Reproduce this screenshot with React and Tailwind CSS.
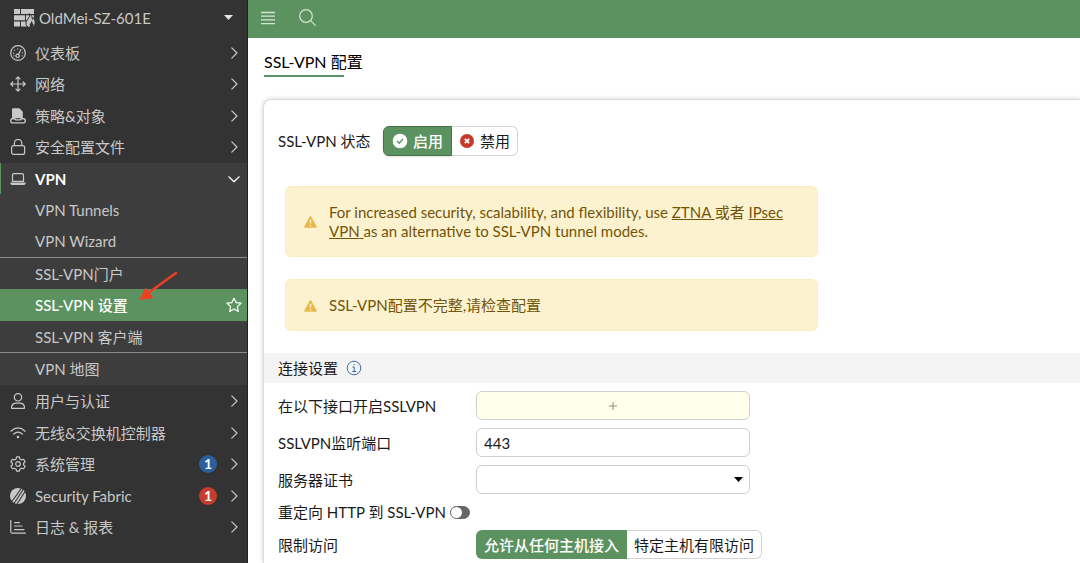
import { useState } from "react";

const line = {
  fill: "none",
  stroke: "currentColor",
  strokeWidth: 1.2,
  strokeLinecap: "round",
  strokeLinejoin: "round",
};

const icons = {
  gauge: (
    <g {...line}>
      <circle cx="8" cy="8" r="7.3" />
      <circle cx="7.6" cy="10.8" r="1.7" />
      <path d="M8.6 9.3 11 4.6" />
      <path d="M3.4 8.2h.2M4.6 5.2l.1.1M7.6 3.8V4M12.4 7.8h.2M3.9 10.8h.1M12.1 10.8h.1" />
    </g>
  ),
  move: (
    <g {...line}>
      <path d="M8 .8v14.4M.8 8h14.4M6 2.8l2-2 2 2M6 13.2l2 2 2-2M2.8 6l-2 2 2 2M13.2 6l2 2-2 2" />
    </g>
  ),
  policy: (
    <g>
      <path fill="currentColor" d="M2 1.2Q2 .3 3 .3h6.4l3.4 3.4v6.5H2z" />
      <path
        fill="#333333"
        stroke="currentColor"
        strokeWidth="1.4"
        d="M2.4 10.7h2.4q.5 1.2 1.5 1.2h3.6q1-.1 1.4-1.2h2.3q1.6 0 1.6 1.7v.8q0 1.7-1.7 1.7H2.5q-1.7 0-1.7-1.7v-.8q0-1.7 1.6-1.7z"
      />
    </g>
  ),
  lock: (
    <g {...line}>
      <rect x="1.6" y="6.6" width="13" height="8.8" rx="2" />
      <path d="M4.4 6.4V4a3.7 3.7 0 0 1 7.4 0v2.4" />
    </g>
  ),
  laptop: (
    <g {...line}>
      <path d="M2.5 10.4V4q0-1.4 1.4-1.4h8.2q1.4 0 1.4 1.4v6.4z" />
      <path fill="currentColor" d="M.8 12h14.4q-.2 1.5-1.6 1.5H2.4Q1 13.5.8 12z" />
    </g>
  ),
  user: (
    <g {...line}>
      <circle cx="8" cy="4.3" r="3.7" />
      <path d="M1.5 15.3q-.2-4.5 4-5.1h5q4.2.6 4 5.1z" />
    </g>
  ),
  wifi: (
    <g {...line}>
      <path d="M.9 6.2Q8-.4 15.1 6.2M3.7 9q4.3-3.8 8.6 0" />
      <circle cx="8" cy="12" r="1.3" fill="currentColor" stroke="none" />
    </g>
  ),
  gear: (
    <g {...line}>
      <path d="M6.6.9h2.8l.5 2 1.7 1 2-.6 1.5 2.5-1.5 1.4v1.7l1.5 1.4-1.5 2.5-2-.6-1.7 1-.5 2H6.6l-.5-2-1.7-1-2 .6L.9 10.3l1.5-1.4V7.2L.9 5.8l1.5-2.5 2 .6 1.7-1z" />
      <circle cx="8" cy="8" r="2.3" />
    </g>
  ),
  fabric: (
    <g>
      <circle cx="8" cy="8" r="8" fill="currentColor" />
      <path
        stroke="#333333"
        strokeWidth="1.1"
        d="M13.2 1.5 4 15.5M15.2 3.2 7 16M11.5 0 7 6.5 1.8 13.5"
      />
    </g>
  ),
  chart: (
    <g {...line}>
      <path d="M.8 1.4v11q0 1.8 1.8 1.8h13M4.5 3.6h5M4.5 7h7.5M4.5 10.6h9.5" />
    </g>
  ),
};

const menu = [
  { label: "仪表板", icon: "gauge" },
  { label: "网络", icon: "move" },
  { label: "策略&对象", icon: "policy" },
  { label: "安全配置文件", icon: "lock" },
  {
    label: "VPN",
    icon: "laptop",
    items: [
      { label: "VPN Tunnels" },
      { label: "VPN Wizard" },
      { label: "SSL-VPN门户", divider: true },
      { label: "SSL-VPN 设置", active: true },
      { label: "SSL-VPN 客户端" },
      { label: "VPN 地图", divider: true },
    ],
  },
  { label: "用户与认证", icon: "user" },
  { label: "无线&交换机控制器", icon: "wifi" },
  { label: "系统管理", icon: "gear", badge: 1, badgeColor: "bg-[#2c5f9b]" },
  { label: "Security Fabric", icon: "fabric", badge: 1, badgeColor: "bg-[#c63d2d]" },
  { label: "日志 & 报表", icon: "chart" },
];

function Chevron({ open }) {
  return (
    <svg className="mr-[5px] size-4 shrink-0" viewBox="0 0 16 16" {...line}>
      <path d={open ? "M2.8 5.8 8 10.8l5.2-5" : "M5.8 2.8 11 8l-5.2 5.2"} />
    </svg>
  );
}

function RedArrow() {
  return (
    <svg
      className="pointer-events-none absolute bottom-[18px] left-[138px] h-8 w-10"
      viewBox="0 0 40 32"
    >
      <path d="M38 2 11 21.5" stroke="#f03e23" strokeWidth="2.4" strokeLinecap="round" />
      <path d="M1.5 29 7.5 16.5 15.5 27z" fill="#f03e23" />
    </svg>
  );
}

function SubMenu({ items }) {
  return (
    <ul>
      {items.map((item) => (
        <li
          key={item.label}
          className={`box-content odd:h-[31px] even:h-8 ${
            item.divider ? "border-t border-[#8a8a8a]" : ""
          }`}
        >
          <a
            href="#"
            className={`relative flex h-full items-center pl-[35px] ${
              item.active ? "bg-[#5c925f] font-medium text-white" : ""
            }`}
          >
            <span className="flex-1">{item.label}</span>
            {item.active && (
              <>
                <svg className="mr-[5px] size-4" viewBox="0 0 16 16" {...line}>
                  <path d="m8 1.2 2.1 4.4 4.9.6-3.6 3.4.9 4.9L8 12.1l-4.3 2.4.9-4.9L1 6.2l4.900-.6z" />
                </svg>
                <RedArrow />
              </>
            )}
          </a>
        </li>
      ))}
    </ul>
  );
}

function Sidebar() {
  return (
    <aside className="w-62 shrink-0 border-r border-[#222222] bg-[#333333] text-[#c8c8c8]">
      <button className="flex h-[37px] w-full items-center pb-0.5 pl-3.5 text-left">
        <svg className="h-[18px] w-[21px]" viewBox="0 0 21 18" fill="currentColor">
          <path d="M0 0h6v5H0zM7 0h13v5H7zM0 6.3h11v5H0zM12 6.3h8v5h-8zM0 12.6h6v5H0zM7 12.6h7v5H7z" />
          <path
            stroke="#333333"
            d="M15.5 4.500q1 3-1.500 5.500-2.800 3-2 5.500.6 1.900 2.500 2.700h4q2.700-1.200 2.700-4.200 0-3-1.700-5.500-.2 1.500-1 2Q18.500 7 15.500 4.500z"
          />
          <path fill="#333333" d="M16 18q-1-2.500.5-4 1.200-1 1-2.500 1.500 1.500 1 3l1 .5q.5 2-1 3z" />
        </svg>
        <span className="ml-1 flex-1">OldMei-SZ-601E</span>
        <svg className="mr-3.5 h-[5px] w-[9px]" viewBox="0 0 9 5" fill="#e4e4e4">
          <path d="M0 0h9L4.5 5z" />
        </svg>
      </button>
      <nav>
        <ul>
          {menu.map((entry, i) => (
            <li key={entry.label} className={entry.items ? "bg-[#3d3d3d]" : ""}>
              <button
                className={`flex w-full items-center text-left ${
                  i % 2 ? "h-8" : "h-[31px]"
                } ${
                  entry.items
                    ? "border-l border-[#5c925f] pl-[9px] font-bold text-white"
                    : "pl-2.5"
                }`}
              >
                <svg className="size-4 shrink-0 text-[#c8c8c8]" viewBox="0 0 16 16">
                  {icons[entry.icon]}
                </svg>
                <span className="ml-[9px] flex-1">{entry.label}</span>
                {entry.badge && (
                  <span
                    className={`mr-[9px] flex size-[18px] items-center justify-center rounded-full text-sm font-bold text-white ${entry.badgeColor}`}
                  >
                    {entry.badge}
                  </span>
                )}
                <Chevron open={Boolean(entry.items)} />
              </button>
              {entry.items && <SubMenu items={entry.items} />}
            </li>
          ))}
        </ul>
      </nav>
    </aside>
  );
}

function TopBar() {
  return (
    <header className="flex h-[38px] items-center gap-[23px] bg-[#5c925f] pb-[3px] pl-3 text-[#d5e5d5]">
      <button aria-label="Menu">
        <svg className="size-4" viewBox="0 0 16 16" stroke="currentColor" strokeWidth="1.3">
          <path d="M1 2.5h14M1 6.2h14M1 9.9h14M1 13.6h14" />
        </svg>
      </button>
      <button aria-label="Search">
        <svg className="size-[17px]" viewBox="0 0 17 17" {...line}>
          <circle cx="7" cy="7" r="6.3" />
          <path d="m11.6 11.6 4.7 4.7" />
        </svg>
      </button>
    </header>
  );
}

function Alert({ children }) {
  return (
    <div className="ml-[7px] flex max-w-[533px] items-center rounded-md border border-[#fbecc0] bg-[#fdf2d0] pt-4 pr-8 pb-[15px] pl-[18px] leading-[19px] text-[#725408]">
      <svg className="mr-3 h-3 w-[13px] shrink-0" viewBox="0 0 13 12">
        <path
          d="M6.5 1 12 11H1z"
          fill="#e8b949"
          stroke="#e8b949"
          strokeWidth="1.6"
          strokeLinejoin="round"
        />
        <path d="M6.5 3.8v3.6M6.5 8.9v1.3" stroke="#fdf2d0" strokeWidth="1.4" />
      </svg>
      <p>{children}</p>
    </div>
  );
}

function StatusToggle() {
  const [enabled, setEnabled] = useState(true);
  return (
    <div role="radiogroup" aria-labelledby="status-label" className="flex items-center">
      <span id="status-label" className="w-[105px]">
        SSL-VPN 状态
      </span>
      <label className="flex h-[30px] items-center gap-[5px] rounded-l-md border border-[#47704a] bg-[#5c925f] px-2 font-medium text-white shadow">
        <input
          type="radio"
          name="status"
          className="sr-only"
          checked={enabled}
          onChange={() => setEnabled(true)}
        />
        <svg className="size-4" viewBox="0 0 16 16">
          <circle cx="8" cy="8" r="7.3" fill="#fff" />
          <path d="m5 8 2.2 2.2L11 6" fill="none" stroke="#5c925f" strokeWidth="1.4" />
        </svg>
        启用
      </label>
      <label className="flex h-[30px] items-center gap-[5px] rounded-r-md border border-l-0 border-[#d3d3d3] bg-white px-[7px]">
        <input
          type="radio"
          name="status"
          className="sr-only"
          checked={!enabled}
          onChange={() => setEnabled(false)}
        />
        <svg className="size-4" viewBox="0 0 16 16">
          <circle cx="8" cy="8" r="7" fill="#c5392b" />
          <path d="m5.8 5.8 4.4 4.4M10.2 5.8l-4.4 4.4" stroke="#fff" strokeWidth="1.8" />
        </svg>
        禁用
      </label>
    </div>
  );
}

const field = "h-[29px] w-[274px] rounded-md border border-[#cfcfcf]";

function ConnectionSettings() {
  const [port, setPort] = useState("443");
  const [redirect, setRedirect] = useState(false);
  const [access, setAccess] = useState("any");

  return (
    <section>
      <h2 className="mt-[22px] flex h-[30px] items-center gap-2 bg-[#f4f4f4] pl-3.5">
        连接设置
        <svg className="size-4" viewBox="0 0 16 16" fill="none" stroke="#3b6ca8">
          <circle cx="8" cy="8" r="6.8" />
          <path d="M6.5 7h1.7v4.3M6.2 11.5h4M7.5 4.7h1.2" />
        </svg>
      </h2>
      <div className="flex flex-col gap-2 pt-2 pl-3.5">
        <div className="flex items-center">
          <label htmlFor="interfaces" className="w-[198px]">
            在以下接口开启SSLVPN
          </label>
          <button
            id="interfaces"
            className={`${field} flex items-center justify-center bg-[#ffffec]`}
          >
            <svg className="size-2" viewBox="0 0 8 8" stroke="#8c8c86">
              <path d="M4 0v8M0 4h8" />
            </svg>
          </button>
        </div>
        <div className="flex items-center">
          <label htmlFor="port" className="w-[198px]">
            SSLVPN监听端口
          </label>
          <input
            id="port"
            type="text"
            value={port}
            onChange={(e) => setPort(e.target.value)}
            className={`${field} bg-white px-[7px]`}
          />
        </div>
        <div className="flex items-center">
          <label htmlFor="cert" className="w-[198px]">
            服务器证书
          </label>
          <div className="relative">
            <select id="cert" className={`${field} block appearance-none bg-white px-[7px]`}>
              <option></option>
            </select>
            <svg
              className="pointer-events-none absolute top-3 right-[7px] h-[5px] w-[9px]"
              viewBox="0 0 9 5"
            >
              <path d="M0 0h9L4.5 5z" />
            </svg>
          </div>
        </div>
        <label className="flex h-5 items-center gap-1 self-start">
          重定向 HTTP 到 SSL-VPN
          <input
            type="checkbox"
            className="peer sr-only"
            checked={redirect}
            onChange={(e) => setRedirect(e.target.checked)}
          />
          <span className="flex h-[13px] w-5 rounded-full border border-[#666666] bg-[#666666] peer-checked:justify-end peer-checked:bg-[#5c925f]">
            <span className="size-[11px] rounded-full bg-white"></span>
          </span>
        </label>
        <div role="radiogroup" aria-labelledby="access-label" className="flex items-center">
          <span id="access-label" className="w-[198px]">
            限制访问
          </span>
          <label className="flex h-[29px] items-center rounded-l-md bg-[#5c925f] px-2 font-medium text-white">
            <input
              type="radio"
              name="access"
              className="sr-only"
              checked={access === "any"}
              onChange={() => setAccess("any")}
            />
            允许从任何主机接入
          </label>
          <label className="flex h-[29px] items-center rounded-r-md border border-l-0 border-[#d3d3d3] px-[7px]">
            <input
              type="radio"
              name="access"
              className="sr-only"
              checked={access === "limited"}
              onChange={() => setAccess("limited")}
            />
            特定主机有限访问
          </label>
        </div>
      </div>
    </section>
  );
}

export default function App() {
  return (
    <div className="flex h-screen overflow-hidden bg-white font-['Lato','Noto_Sans_CJK_SC',sans-serif] text-[15px] leading-5 text-[#1a1a1a]">
      <Sidebar />
      <div className="flex min-w-0 flex-1 flex-col">
        <TopBar />
        <main className="flex flex-1 flex-col">
          <h1 className="mt-3 ml-4 self-start pb-[22px] text-base leading-[23px] text-black">
            SSL-VPN 配置
            <span className="mt-0.5 block h-0.5 w-20 bg-[#5c925f]"></span>
          </h1>
          <div className="ml-[15px] flex-1 rounded-tl-lg border-t border-l border-[#dcdcdc] shadow-[0_0_4px_rgba(0,0,0,0.2)]">
            <div className="flex flex-col gap-[22px] pt-[26px] pl-3.5">
              <StatusToggle />
              <div className="flex flex-col gap-[22px] pt-2">
                <Alert>
                  For increased security, scalability, and flexibility, use{" "}
                  <a href="#" className="underline">
                    ZTNA{" "}
                  </a>
                  或者{" "}
                  <a href="#" className="underline">
                    IPsec VPN{" "}
                  </a>
                  as an alternative to SSL-VPN tunnel modes.
                </Alert>
                <Alert>SSL-VPN配置不完整,请检查配置</Alert>
              </div>
            </div>
            <ConnectionSettings />
          </div>
        </main>
      </div>
    </div>
  );
}
